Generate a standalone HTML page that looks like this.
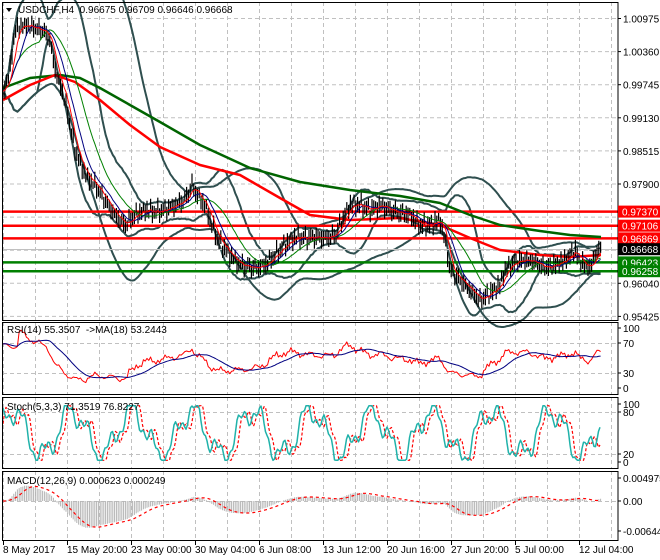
<!DOCTYPE html>
<html><head><meta charset="utf-8">
<style>
html,body{margin:0;padding:0;background:#fff;}
svg{display:block;font-family:"Liberation Sans",sans-serif;font-size:10px;}
</style></head>
<body>
<svg id="s" width="660" height="560" xmlns="http://www.w3.org/2000/svg"></svg>
<script>
var S=document.getElementById('s'),out='';
function L(x1,y1,x2,y2,c,w,d){out+='<line x1="'+x1+'" y1="'+y1+'" x2="'+x2+'" y2="'+y2+'" stroke="'+c+'" stroke-width="'+(w||1)+'"'+(d?' stroke-dasharray="'+d+'"':'')+'/>';}
function P(pts,c,w,d){var s='';for(var i=0;i<pts.length;i++)if(pts[i])s+=pts[i][0].toFixed(1)+','+pts[i][1].toFixed(1)+' ';out+='<polyline fill="none" points="'+s+'" stroke="'+c+'" stroke-width="'+(w||1)+'"'+(d?' stroke-dasharray="'+d+'"':'')+' stroke-linejoin="round"/>';}
function T(x,y,t,c,a){out+='<text x="'+x+'" y="'+y+'" fill="'+(c||'#000')+'"'+(a?' text-anchor="'+a+'"':'')+'>'+t+'</text>';}
function R(x,y,w,h,f){out+='<rect x="'+x+'" y="'+y+'" width="'+w+'" height="'+h+'" fill="'+f+'"/>';}
var RX=618;
var panels=[[2,320],[322,394],[397,468],[471,540]];
for(var gx=3;gx<RX;gx+=32){panels.forEach(function(p){L(gx+.5,p[0],gx+.5,p[1],'#c0c0c0',1,'4,3');});}
for(var k=0;k<10;k++){var gy=18.5+k*33.1;L(3,gy,RX,gy,'#c0c0c0',1,'4,3');}
[343,373].forEach(function(y){L(3,y+.5,RX,y+.5,'#c0c0c0',1,'4,3');});
[412,454].forEach(function(y){L(3,y+.5,RX,y+.5,'#c0c0c0',1,'4,3');});
L(3,501.5,RX,501.5,'#c0c0c0',1,'4,3');
var keys=[[3,95],[10,70],[15,30],[25,25],[35,28],[45,32],[50,40],[55,70],[65,100],[75,150],[85,175],[95,185],[105,200],[115,215],[125,225],[135,215],[145,210],[155,212],[165,210],[175,205],[185,200],[192,185],[197,195],[205,205],[212,225],[218,240],[230,255],[240,265],[255,268],[265,265],[275,255],[285,245],[295,237],[305,238],[315,237],[325,238],[335,235],[345,215],[350,205],[360,205],[370,210],[380,205],[390,210],[400,213],[410,215],[420,225],[430,225],[440,220],[445,240],[450,270],[460,280],[470,290],[480,300],[490,293],[500,285],[505,270],[515,262],[525,260],[535,262],[545,268],[555,265],[565,260],[575,250],[580,262],[590,268],[595,255],[601,247]];
function ip(k,x){for(var i=1;i<k.length;i++){if(x<=k[i][0]){var a=k[i-1],b=k[i];return a[1]+(b[1]-a[1])*(x-a[0])/(b[0]-a[0]);}}return k[k.length-1][1];}
var X=[],C=[],H=[],Lo=[];
for(var x=3;x<=601;x+=1.8){var c=ip(keys,x)+3*Math.sin(x*1.7)+2*Math.sin(x*0.9+1);X.push(x);C.push(c);H.push(c-3-Math.abs(Math.sin(x*2.3))*6);Lo.push(c+3+Math.abs(Math.cos(x*1.3))*6);}
var n=X.length;
function sma(a,p){var r=[];for(var i=0;i<n;i++){var s=0,m=0;for(var j=Math.max(0,i-p+1);j<=i;j++){s+=a[j];m++;}r.push(s/m);}return r;}
function sd(a,p,mu){var r=[];for(var i=0;i<n;i++){var s=0,m=0;for(var j=Math.max(0,i-p+1);j<=i;j++){s+=(a[j]-mu[i])*(a[j]-mu[i]);m++;}r.push(Math.sqrt(s/m));}return r;}
function pts(a){return a.map(function(v,i){return [X[i],v];});}
[[20,2],[50,2]].forEach(function(q){var m=sma(C,q[0]),d=sd(C,q[0],m);P(pts(m.map(function(v,i){return v-q[1]*d[i]-2;})),'#2f4f4f',2);P(pts(m.map(function(v,i){return v+q[1]*d[i]+2;})),'#2f4f4f',2);});
L(3,249.5,RX,249.5,'#c0c0c0',1);
[211.6,225.7,238.4].forEach(function(y){L(3,y,RX,y,'#ff0000',2.5);});
[262.4,271.2].forEach(function(y){L(3,y,RX,y,'#008000',2.5);});
P([[3,88],[30,78],[60,75],[80,78],[100,88],[130,105],[160,122],[200,145],[250,168],[300,182],[350,190],[400,196],[440,203],[470,215],[500,225],[540,231],[570,235],[601,237]],'#006400',2.5);
P([[3,100],[30,85],[55,75],[75,82],[100,100],[130,125],[160,147],[200,165],[240,175],[280,198],[310,215],[350,220],[400,218],[440,225],[470,238],[500,250],[540,255],[570,257],[601,255]],'#ff0000',2.5);
var b='';for(var i=0;i<n;i++){b+='M'+X[i].toFixed(1)+' '+H[i].toFixed(1)+'V'+Lo[i].toFixed(1);}
out+='<path d="'+b+'" stroke="#000" stroke-width="1.2" fill="none"/>';
P(pts(sma(C,21)),'#008000',1);P(pts(sma(C,10)),'#000080',1);P(pts(sma(C,5)),'#ff0000',1);
// RSI
var rsi=[],ag=0,al=0;for(var i=0;i<n;i++){var ch=i?C[i-1]-C[i]:0;var g=Math.max(ch,0),l=Math.max(-ch,0);if(i<14){ag=(ag*i+g)/(i+1);al=(al*i+l)/(i+1);}else{ag=(ag*13+g)/14;al=(al*13+l)/14;}var r=al==0?70:100-100/(1+ag/al);rsi.push(r);}
var rs=rsi.map(function(v,i){return 50+(v-50)*1.0+4*Math.sin(X[i]*0.35);});
var rm=[];for(var i=0;i<n;i++){var s=0,m=0;for(var j=Math.max(0,i-17);j<=i;j++){s+=rs[j];m++;}rm.push(s/m);}
P(rs.map(function(v,i){return [X[i],388-v*0.6];}),'#ff0000',1);
P(rm.map(function(v,i){return [X[i],388-v*0.6];}),'#000080',1);
// Stoch synthetic
function kf(x){var v=50+38*Math.sin(x*0.105+0.3)+18*Math.sin(x*0.29+1.2)+8*Math.sin(x*0.8);return Math.max(3,Math.min(97,v));}
var K3=[],D=[];for(var x=3;x<=601;x+=1.5){K3.push([x,462-kf(x)*0.58]);D.push([x,462-kf(x-4)*0.58]);}
P(D,'#ff0000',1.2,'3,2');
P(K3,'#20b2aa',1.5);
// MACD
function ema(a,p){var r=[],k=2/(p+1);for(var i=0;i<n;i++)r.push(i?a[i]*k+r[i-1]*(1-k):a[i]);return r;}
var neg=C.map(function(v){return -v;});var e1=ema(neg,12),e2=ema(neg,26);var md=e1.map(function(v,i){return v-e2[i];});var sg=sma(md,9);
var hb='';for(var i=0;i<n;i++){var y=501-md[i]*0.86;hb+='M'+X[i].toFixed(1)+' 501V'+y.toFixed(1);}
out+='<path d="'+hb+'" stroke="#b4b4b4" stroke-width="1" fill="none"/>';
P(sg.map(function(v,i){return [X[i],501-v*0.86];}),'#ff0000',1.2,'3,3');
panels.forEach(function(p){out+='<rect x="2.5" y="'+(p[0]+.5)+'" width="'+(RX-2.5)+'" height="'+(p[1]-p[0])+'" fill="none" stroke="#000" stroke-width="1"/>';});
R(0,0,2,560,'#fff');
var pl=['1.00975','1.00360','0.99745','0.99130','0.98515','0.97900','','','0.96040','0.95425'];
for(var k=0;k<10;k++){var gy=18.5+k*33.1;if(pl[k]){L(RX,gy,RX+3,gy,'#000');T(623,gy+4,pl[k]);}}
var boxes=[[211.6,'0.97370','#ff0000','#fff'],[225.7,'0.97106','#ff0000','#fff'],[238.4,'0.96869','#ff0000','#fff'],[249.2,'0.96668','#000','#fff'],[262.4,'0.96423','#008000','#fff'],[271.2,'0.96258','#008000','#fff']];
boxes.forEach(function(b){R(RX,b[0]-6,42,12,b[2]);T(622,b[0]+4,b[1],b[3]);});
[[328,'100'],[343,'70'],[373,'30'],[388,'0'],[404,'100'],[412,'80'],[454,'20'],[462,'0'],[478,'0.004975'],[501,'0.00'],[531,'-0.006447']].forEach(function(a){L(RX,a[0],RX+3,a[0],'#000');T(623,a[0]+4,a[1]);});
var tl=['8 May 2017','15 May 20:00','23 May 00:00','30 May 04:00','6 Jun 08:00','13 Jun 12:00','20 Jun 16:00','27 Jun 20:00','5 Jul 00:00','12 Jul 04:00'];
tl.forEach(function(t,i){var x=3+i*64;L(x+.5,540,x+.5,545,'#000');T(x,553,t);});
out+='<polygon points="6,8 12,8 9,12" fill="#000"/>';
T(18,13,'USDCHF,H4&#160; 0.96675 0.96709 0.96646 0.96668');
T(7,333,'RSI(14) 55.3507&#160; -&gt;MA(18) 53.2443');
T(7,410,'Stoch(5,3,3) 71.3519 76.8227');
T(7,484,'MACD(12,26,9) 0.000623 0.000249');
S.innerHTML=out;
</script>
</body></html>
